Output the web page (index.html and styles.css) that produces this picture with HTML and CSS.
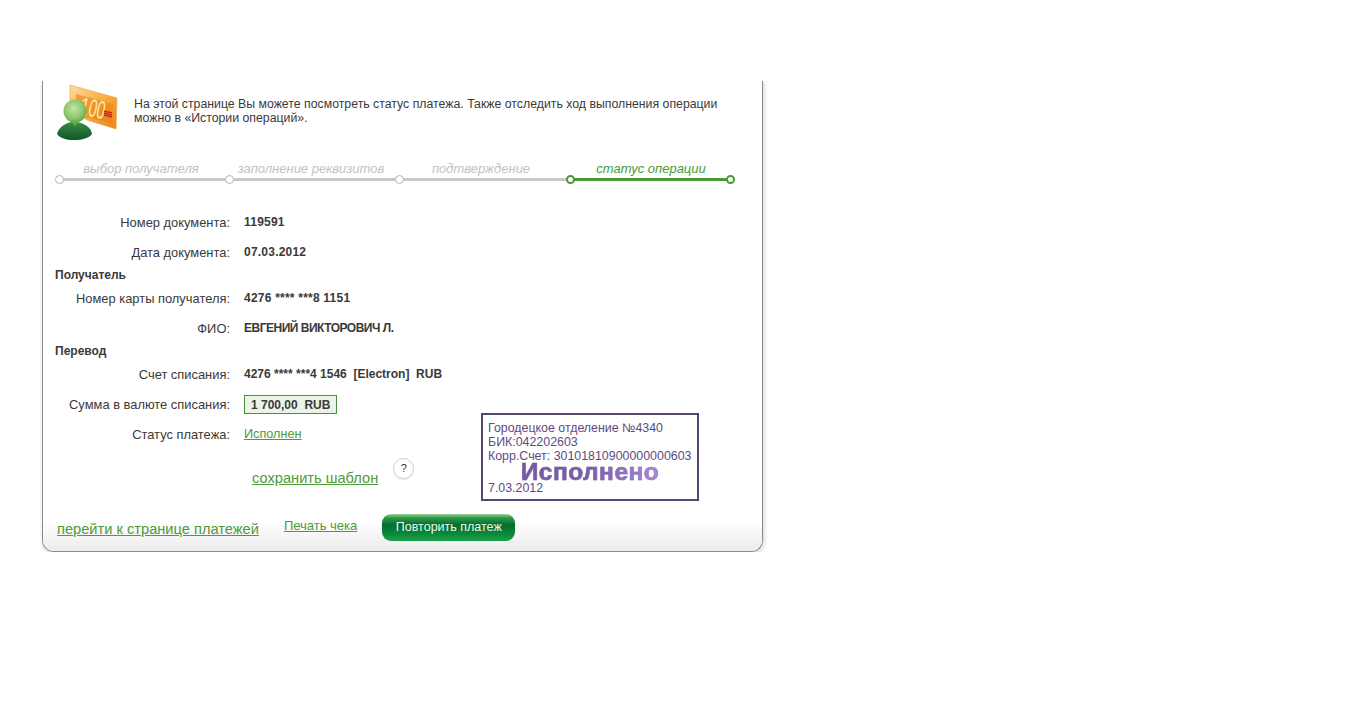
FILE: index.html
```html
<!DOCTYPE html>
<html lang="ru">
<head>
<meta charset="utf-8">
<title>Статус платежа</title>
<link rel="stylesheet" href="styles.css">
</head>
<body>
<main class="card">
  <section class="intro">
    <svg class="intro-icon" width="66" height="60" viewBox="0 0 66 60" aria-hidden="true">
      <defs>
        <linearGradient id="note" x1="0" y1="0" x2="1" y2="1">
          <stop offset="0" stop-color="#fadfa8"/>
          <stop offset="0.45" stop-color="#f8b348"/>
          <stop offset="1" stop-color="#ea8420"/>
        </linearGradient>
        <radialGradient id="head" cx="0.45" cy="0.4" r="0.7">
          <stop offset="0" stop-color="#c4e4a6"/>
          <stop offset="0.6" stop-color="#8ac66a"/>
          <stop offset="1" stop-color="#4d9a3c"/>
        </radialGradient>
        <linearGradient id="body" x1="0" y1="0" x2="0" y2="1">
          <stop offset="0" stop-color="#3d8a48"/>
          <stop offset="1" stop-color="#0f5629"/>
        </linearGradient>
      </defs>
      <polygon points="18,3 65,16 64,47 35,38 18,28" fill="url(#note)" stroke="#e8a040" stroke-width="0.6"/>
      <polygon points="24,12 61,22 60,42 24,32" fill="#f08010" opacity="0.6"/>
      <text x="27" y="32" class="note-text" textLength="25" lengthAdjust="spacingAndGlyphs" transform="rotate(12 27 32)">100</text>
      <path d="M52 29l8 2M52 31l8 2M52 33l8 2" stroke="#c4321f" stroke-width="1.300"/>
      <path d="M5 52c2-7 8-11 15-12h4c8 1 15 5 16 12-3 4-10 6-18 6S8 56 5 52z" fill="url(#body)"/>
      <path d="M17 38l6 6 6-6z" fill="#5da647"/>
      <circle cx="23" cy="29" r="11.500" fill="url(#head)"/>
    </svg>
    <p class="intro-text">На этой странице Вы можете посмотреть статус платежа. Также отследить ход выполнения операции<br>можно в «Истории операций».</p>
  </section>

  <ol class="steps">
    <li class="step step-a">выбор получателя</li>
    <li class="step step-b">заполнение реквизитов</li>
    <li class="step step-c">подтверждение</li>
    <li class="step step-d step-active">статус операции</li>
  </ol>

  <dl class="details">
    <dt class="label">Номер документа:</dt><dd class="value value-wide">119591</dd>
    <dt class="label">Дата документа:</dt><dd class="value value-wide">07.03.2012</dd>
    <div class="group">Получатель</div>
    <dt class="label">Номер карты получателя:</dt><dd class="value value-wide">4276 **** ***8 1151</dd>
    <dt class="label">ФИО:</dt><dd class="value value-name">ЕВГЕНИЙ ВИКТОРОВИЧ Л.</dd>
    <div class="group">Перевод</div>
    <dt class="label">Счет списания:</dt><dd class="value">4276 **** ***4 1546&nbsp; [Electron]&nbsp; RUB</dd>
    <dt class="label">Сумма в валюте списания:</dt><dd class="value"><span class="amount">1 700,00&nbsp; RUB</span></dd>
    <dt class="label">Статус платежа:</dt><dd class="value"><a class="link status" href="#">Исполнен</a></dd>
  </dl>

  <div class="save-row">
    <a class="link link-big" href="#">сохранить шаблон</a>
    <span class="help">?</span>
  </div>

  <footer class="actions">
    <a class="link link-big" href="#">перейти к странице платежей</a>
    <a class="link print" href="#">Печать чека</a>
    <a class="button" href="#">Повторить платеж</a>
  </footer>

  <aside class="stamp">
    <div>Городецкое отделение №4340</div>
    <div>БИК:042202603</div>
    <div>Корр.Счет: 30101810900000000603</div>
    <div class="stamp-title"><span>Исполнено</span></div>
    <div>7.03.2012</div>
  </aside>
</main>
</body>
</html>
```

FILE: styles.css
```css
*,
*::before,
*::after {
  box-sizing: border-box;
}

html,
body {
  margin: 0;
  background: #fff;
}

body {
  padding: 81px 0 0 42px;
  font-family: "Liberation Sans", Arial, sans-serif;
  font-size: 12px;
  color: #333;
}

.card {
  position: relative;
  width: 721px;
  height: 471px;
  border: 1px solid #8a8a8a;
  border-top: 0;
  border-radius: 0 0 12px 12px;
  box-shadow: 1px 2px 5px rgba(0, 0, 0, 0.18);
  clip-path: inset(0 -10px -10px -10px);
  background: #fff;
}

.intro {
  display: flex;
  align-items: flex-start;
  height: 67px;
  padding: 1px 0 0 9px;
}

.intro-icon {
  flex: none;
  margin-right: 16px;
}

.note-text {
  font-family: "Liberation Sans", Arial, sans-serif;
  font-size: 25px;
  font-weight: 400;
  fill: #fdeab8;
}

.intro-text {
  margin: 15px 0 0;
  font-size: 12.300px;
  line-height: 14px;
  color: #3a3a3a;
}

.steps {
  display: flex;
  margin: 0 0 0 16px;
  padding: 0;
  list-style: none;
}

.step {
  position: relative;
  height: 33px;
  padding-top: 14px;
  border-bottom: 3px solid #c9c9c9;
  font-size: 13px;
  font-style: italic;
  line-height: 14px;
  text-align: center;
  color: #c2c2c2;
}

.step-a,
.step-b {
  width: 170px;
  padding-right: 6px;
}

.step-c {
  width: 171px;
  padding-right: 7px;
}

.step-d {
  width: 160px;
  padding-left: 2px;
}

.step::before {
  content: "";
  position: absolute;
  left: -4px;
  bottom: -6px;
  width: 9px;
  height: 9px;
  border: 1.500px solid #b5b5b5;
  border-radius: 50%;
  background: #fff;
}

.step-active {
  border-color: #4a9a34;
  color: #4a9a34;
}

.step-active::before,
.step-active::after {
  border-color: #4a9a34;
  border-width: 2px;
}

.step-active::after {
  content: "";
  position: absolute;
  right: -5px;
  bottom: -6px;
  width: 9px;
  height: 9px;
  border-style: solid;
  border-radius: 50%;
  background: #fff;
}

.details {
  display: grid;
  grid-template-columns: 187px 1fr;
  column-gap: 14px;
  margin: 35px 0 0;
  line-height: 14px;
}

.label {
  height: 30px;
  font-size: 12.900px;
  text-align: right;
  color: #3a3a3a;
}

.value {
  height: 30px;
  margin: -1px 0 0;
  font-weight: 700;
  color: #3a3a3a;
}

.value-wide {
  letter-spacing: 0.22px;
}

.value-name {
  letter-spacing: -0.5px;
}

.group {
  grid-column: 1 / -1;
  height: 16px;
  margin: -8px 0 8px 12px;
  font-size: 12px;
  font-weight: 700;
  line-height: 14px;
  color: #3a3a3a;
}

.amount {
  display: inline-block;
  margin-top: -2px;
  padding: 2px 6px 1px;
  border: 1px solid #4a8f3c;
  background: #eaf4e6;
  line-height: 14px;
}

.link {
  color: #4f9a3a;
  text-decoration: underline;
}

.status {
  font-size: 12.700px;
  font-weight: 400;
}

.link-big {
  font-size: 14.650px;
}

.save-row {
  display: flex;
  align-items: flex-start;
  height: 53px;
  margin: -3px 0 0 209px;
}

.save-row .link {
  margin-top: 15px;
}

.help {
  width: 21px;
  height: 21px;
  margin: 3px 0 0 15px;
  border: 1px solid #cfcfcf;
  border-radius: 50%;
  box-shadow: 0 1px 1px rgba(0, 0, 0, 0.12);
  font-size: 11px;
  line-height: 19px;
  text-align: center;
}

.actions {
  position: absolute;
  left: 0;
  right: 0;
  bottom: 0;
  display: flex;
  align-items: flex-start;
  height: 40px;
  padding: 3px 0 0 14px;
  border-radius: 0 0 11px 11px;
  background: linear-gradient(#fff 0, #fff 25%, #ebebeb 100%);
}

.actions .link-big {
  margin-top: 7px;
}

.print {
  margin: 4px 0 0 25px;
  font-size: 13px;
}

.button {
  width: 133px;
  height: 27px;
  margin-left: 25px;
  border-radius: 9px;
  background: linear-gradient(#9fd09a 0, #2f9a4a 14%, #006f2c 40%, #0b8a3a 75%, #1aa04a 100%);
  font-size: 12.500px;
  line-height: 27px;
  text-align: center;
  color: #eef7ee;
  text-decoration: none;
}

.stamp {
  position: absolute;
  left: 438px;
  top: 332px;
  width: 218px;
  height: 88px;
  padding: 6px 5px 0;
  border: 2px solid #5a4570;
  background: #fff;
  font-size: 12.400px;
  line-height: 14px;
  color: #5e4a80;
  white-space: nowrap;
}

.stamp-title {
  height: 18px;
  text-align: center;
  font-size: 24.500px;
  font-weight: 700;
  line-height: 18px;
  letter-spacing: 0.5px;
}

.stamp-title span {
  background: linear-gradient(90deg, #765a9e, #7b5fa8 50%, #a98ad8);
  -webkit-background-clip: text;
  background-clip: text;
  color: transparent;
  -webkit-text-stroke: 0.6px rgba(125, 95, 175, 0.55);
}
```
